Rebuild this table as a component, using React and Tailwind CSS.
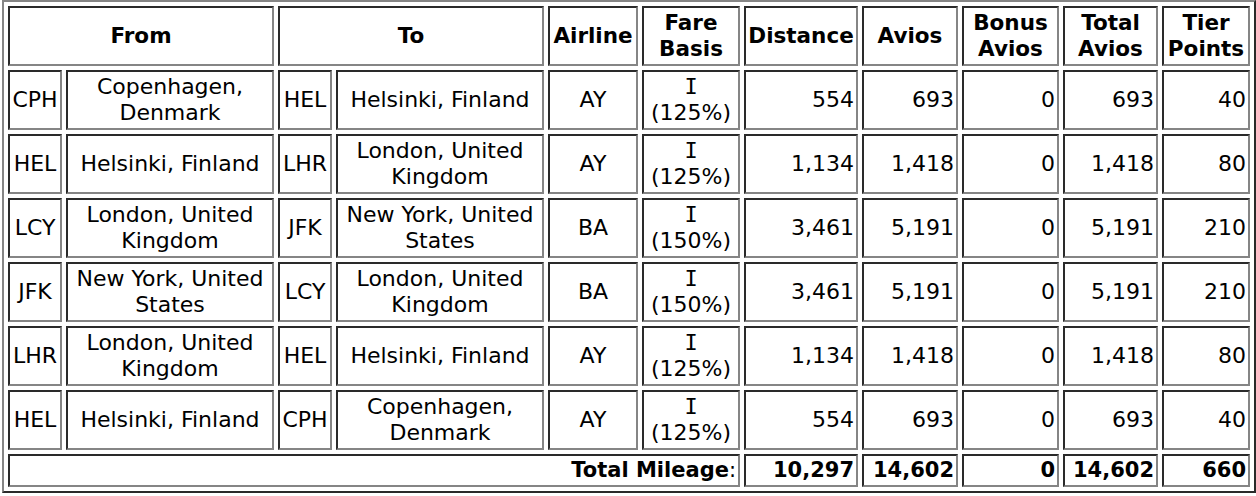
import React from "react";

const rows = [
  ["CPH", ["Copenhagen,", "Denmark"], "HEL", ["Helsinki, Finland"], "AY", "125", "554", "693", "0", "693", "40"],
  ["HEL", ["Helsinki, Finland"], "LHR", ["London, United", "Kingdom"], "AY", "125", "1,134", "1,418", "0", "1,418", "80"],
  ["LCY", ["London, United", "Kingdom"], "JFK", ["New York, United", "States"], "BA", "150", "3,461", "5,191", "0", "5,191", "210"],
  ["JFK", ["New York, United", "States"], "LCY", ["London, United", "Kingdom"], "BA", "150", "3,461", "5,191", "0", "5,191", "210"],
  ["LHR", ["London, United", "Kingdom"], "HEL", ["Helsinki, Finland"], "AY", "125", "1,134", "1,418", "0", "1,418", "80"],
  ["HEL", ["Helsinki, Finland"], "CPH", ["Copenhagen,", "Denmark"], "AY", "125", "554", "693", "0", "693", "40"],
];

const cell =
  "border-2 border-t-[#2a2a2a] border-l-[#2a2a2a] border-b-[#858585] border-r-[#858585] p-[2px] align-middle whitespace-nowrap";

function Lines({ lines }) {
  return lines.map((l, i) => (
    <React.Fragment key={i}>
      {i > 0 && <br />}
      {l}
    </React.Fragment>
  ));
}

export default function App() {
  return (
    <div className="bg-white w-[1256px] h-[496px] overflow-hidden font-['DejaVu_Sans','Verdana',sans-serif] text-[22px] leading-[26px] text-black">
      <table className="ml-[2px] w-[1254px] table-fixed border-separate border-spacing-[4px] border-2 border-t-[#858585] border-l-[#858585] border-b-[#2a2a2a] border-r-[#2a2a2a]">
        <colgroup>
          <col className="w-[54px]" />
          <col className="w-[208px]" />
          <col className="w-[54px]" />
          <col className="w-[208px]" />
          <col className="w-[90px]" />
          <col className="w-[98px]" />
          <col className="w-[114px]" />
          <col className="w-[96px]" />
          <col className="w-[97px]" />
          <col className="w-[95px]" />
          <col className="w-[88px]" />
        </colgroup>
        <thead>
          <tr className="text-[21.5px]">
            <th colSpan={2} className={`${cell} text-center font-bold`}>From</th>
            <th colSpan={2} className={`${cell} text-center font-bold`}>To</th>
            <th className={`${cell} text-center font-bold`}>Airline</th>
            <th className={`${cell} text-center font-bold`}>Fare<br />Basis</th>
            <th className={`${cell} text-center font-bold`}>Distance</th>
            <th className={`${cell} text-center font-bold`}>Avios</th>
            <th className={`${cell} text-center font-bold`}>Bonus<br />Avios</th>
            <th className={`${cell} text-center font-bold`}>Total<br />Avios</th>
            <th className={`${cell} text-center font-bold`}>Tier<br />Points</th>
          </tr>
        </thead>
        <tbody>
          {rows.map((r, i) => (
            <tr key={i}>
              <td className={`${cell} text-center`}>{r[0]}</td>
              <td className={`${cell} text-center`}><Lines lines={r[1]} /></td>
              <td className={`${cell} text-center`}>{r[2]}</td>
              <td className={`${cell} text-center`}><Lines lines={r[3]} /></td>
              <td className={`${cell} text-center`}>{r[4]}</td>
              <td className={`${cell} text-center`}>
                <span className="font-['DejaVu_Sans_Mono',monospace]">I</span>
                <br />({r[5]}%)
              </td>
              <td className={`${cell} text-right`}>{r[6]}</td>
              <td className={`${cell} text-right`}>{r[7]}</td>
              <td className={`${cell} text-right`}>{r[8]}</td>
              <td className={`${cell} text-right`}>{r[9]}</td>
              <td className={`${cell} text-right`}>{r[10]}</td>
            </tr>
          ))}
          <tr className="leading-[25px] text-[21px]">
            <td colSpan={6} className={`${cell} text-right`}>
              <b>Total Mileage</b>:
            </td>
            <td className={`${cell} text-right font-bold`}>10,297</td>
            <td className={`${cell} text-right font-bold`}>14,602</td>
            <td className={`${cell} text-right font-bold`}>0</td>
            <td className={`${cell} text-right font-bold`}>14,602</td>
            <td className={`${cell} text-right font-bold`}>660</td>
          </tr>
        </tbody>
      </table>
    </div>
  );
}
